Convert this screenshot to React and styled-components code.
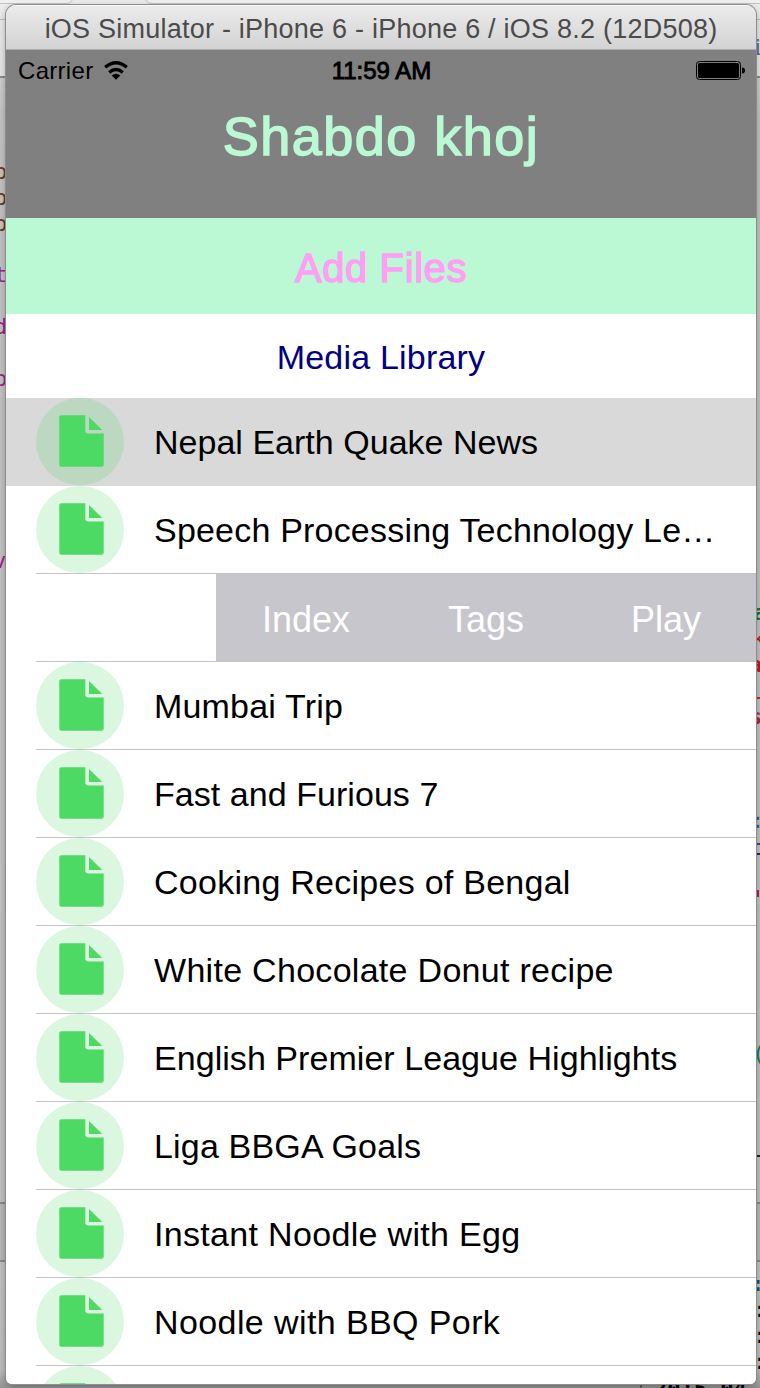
import React from 'react';
import styled, { createGlobalStyle } from 'styled-components';

const Global = createGlobalStyle`
  * { box-sizing: border-box; }
  body { margin: 0; font-family: "Liberation Sans", Arial, sans-serif; }
`;

const Desktop = styled.div`
  position: relative;
  width: 760px;
  height: 1388px;
  padding: 5px 4px 4px 6px;
  overflow: hidden;
  background: linear-gradient(#ececec 0, #e6e6e6 77px, #cfcfcf 78px, #c5c5c5 120px, #c2c2c2 1202px, #b8b8b8 1204px, #b8b8b8 1260px, #c3c3c3 1262px, #bdbdbd 1370px, #969696 1388px);
`;

const Tab = styled.div`
  position: absolute;
  top: -10px;
  left: ${p => p.$x}px;
  width: ${p => p.$w}px;
  height: 14px;
  border: 1px solid #c4c4c4;
  border-radius: 6px;
  background: #f0f0f0;
`;

const Rule = styled.div`
  position: absolute;
  top: ${p => p.$y}px;
  left: ${p => p.$x || 0}px;
  width: ${p => p.$w || 760}px;
  height: ${p => p.$h || 2}px;
  background: ${p => p.$color || '#8b8b8b'};
`;

const Code = styled.span`
  position: absolute;
  top: ${p => p.$y - 13}px;
  left: ${p => p.$x}px;
  font: ${p => (p.$bold ? 700 : 400)} 22px/26px "DejaVu Sans Mono", monospace;
  color: ${p => p.$color};
  white-space: pre;
`;

const Window = styled.div`
  position: relative;
  display: flex;
  flex-direction: column;
  height: 1379px;
  overflow: hidden;
  border-radius: 10px 10px 6px 6px;
  background: #fff;
  box-shadow: 0 0 0 1px #8d8d8d, 0 3px 8px #0005;
`;

const TitleBar = styled.div`
  flex: none;
  height: 45px;
  display: flex;
  justify-content: center;
  align-items: center;
  padding-top: 4px;
  border-top: 1px solid #f8f8f8;
  border-bottom: 1px solid #acacac;
  background: linear-gradient(#ebebeb, #d3d3d3);
  color: #4b4b4b;
`;

const Label = styled.span`
  white-space: pre;
  font-size: ${p => p.$size}px;
  line-height: 1.15;
  letter-spacing: ${p => p.$track || 0}px;
  -webkit-text-stroke: ${p => p.$stroke || 0}px currentColor;
`;

const StatusBar = styled.div`
  height: 40px;
  display: grid;
  grid-template-columns: 1fr auto 1fr;
  align-items: center;
  padding: 1px 11px 0 12px;
  color: #000;
`;

const Carrier = styled.div`
  display: flex;
  align-items: center;
  gap: 11px;
`;

const Battery = styled.svg`
  justify-self: end;
`;

const Header = styled.header`
  flex: none;
  height: 168px;
  background: #808080;
`;

const Heading = styled.div`
  display: flex;
  justify-content: center;
  padding-top: 15px;
  color: #bbf9d5;
`;

const Banner = styled.div`
  flex: none;
  display: flex;
  align-items: center;
  justify-content: center;
  height: ${p => p.$h}px;
  padding-top: 3px;
  background: ${p => p.$bg};
  color: ${p => p.$color};
`;

const Row = styled.div`
  flex: none;
  display: flex;
  height: 88px;
  padding-left: 30px;
  background: ${p => (p.$selected ? '#d9d9d9' : '#fff')};
`;

const RowBody = styled.div`
  flex: 1;
  display: flex;
  align-items: center;
  gap: 30px;
  border-bottom: 1px solid ${p => (p.$line ? '#c4c4c7' : 'transparent')};
  color: #000;
`;

const RowName = styled(Label)`
  padding-top: 3px;
`;

const Badge = styled.svg`
  flex: none;
  align-self: flex-start;
`;

const Actions = styled.div`
  width: 540px;
  margin: 0 0 0 auto;
  height: 87px;
  display: grid;
  grid-template-columns: repeat(3, 1fr);
  background: #c7c6cc;
  color: #fff;
`;

const Action = styled.div`
  display: flex;
  align-items: center;
  justify-content: center;
  padding-top: 4px;
`;

const FileBadge = () => (
  <Badge width="88" height="88" viewBox="0 0 88 88">
    <ellipse cx="44" cy="43.6" rx="44" ry="43.7" fill="#4cd964" fillOpacity=".2" />
    <path fill="#4cd964" d="M25.300 17.300H49.300v15.200a3 3 0 0 0 3 3H67.700V66.700a2 2 0 0 1-2 2H25.300a2 2 0 0 1-2-2V19.300a2 2 0 0 1 2-2Z" />
    <path fill="#4cd964" d="M53 19l13.200 13H53Z" />
  </Badge>
);

const files = [
  { name: 'Nepal Earth Quake News', selected: true, track: 0.02 },
  { name: 'Speech Processing Technology Le…', track: 0.2 },
  { actions: ['Index', 'Tags', 'Play'] },
  { name: 'Mumbai Trip', track: 0.18 },
  { name: 'Fast and Furious 7', track: 0.05 },
  { name: 'Cooking Recipes of Bengal', track: 0.26 },
  { name: 'White Chocolate Donut recipe', track: 0.29 },
  { name: 'English Premier League Highlights', track: 0.05 },
  { name: 'Liga BBGA Goals', track: 0.17 },
  { name: 'Instant Noodle with Egg', track: 0.32 },
  { name: 'Noodle with BBQ Pork', track: 0.4 },
  { name: '' },
];

const code = [
  { t: 'p', x: -6, y: 172, color: '#6b3a1e' },
  { t: 'p', x: -6, y: 198, color: '#6b3a1e' },
  { t: 'p', x: -6, y: 224, color: '#6b3a1e' },
  { t: 't', x: -6, y: 275, color: '#9b2393' },
  { t: 'd', x: -6, y: 327, color: '#9b2393' },
  { t: 'p', x: -6, y: 379, color: '#9b2393' },
  { t: 'v', x: -7, y: 561, color: '#9b2393' },
  { t: 'i', x: 751, y: 48, color: '#5b73a5' },
  { t: 'a', x: 753, y: 613, color: '#0b7d1c', bold: true },
  { t: 'k', x: 752, y: 639, color: '#c41a16' },
  { t: 'a', x: 749, y: 665, color: '#c41a16', bold: true },
  { t: 's', x: 749, y: 717, color: '#c41a3c', bold: true },
  { t: ':', x: 751, y: 821, color: '#2b5a9a' },
  { t: '(', x: 752, y: 1054, color: '#0a7d5c' },
  { t: ':', x: 751, y: 1284, color: '#1b4f8c', bold: true },
  { t: ':', x: 753, y: 1310, color: '#111' },
  { t: ':', x: 753, y: 1336, color: '#111' },
  { t: ':', x: 753, y: 1362, color: '#111' },
  { t: '2015-04-', x: 654, y: 1389, color: '#000', bold: true },
];

const rules = [
  { y: 19, h: 1, color: '#bdbdbd' },
  { y: 76 },
  { y: 697, x: 756, color: '#c0302a' },
  { y: 843, x: 756, color: '#4a3f8a' },
  { y: 853, x: 756, color: '#30207a' },
  { y: 890, x: 756, w: 3, h: 7, color: '#c2185b' },
  { y: 1155, x: 756, color: '#222' },
  { y: 1202 },
  { y: 1260 },
  { y: 1384, x: 640, w: 2, h: 4, color: '#666' },
];

export default function App() {
  return (
    <Desktop>
      <Global />
      <Tab $x={-20} $w={93} />
      <Tab $x={145} $w={640} />
      {rules.map(r => <Rule key={r.y} $y={r.y} $x={r.x} $w={r.w} $h={r.h} $color={r.color} />)}
      {code.map(c => <Code key={c.y} $y={c.y} $x={c.x} $color={c.color} $bold={c.bold}>{c.t}</Code>)}
      <Window>
        <TitleBar><Label $size={27} $track={0.23}>iOS Simulator - iPhone 6 - iPhone 6 / iOS 8.2 (12D508)</Label></TitleBar>
        <Header>
          <StatusBar>
            <Carrier>
              <Label $size={24} $track={0.3}>Carrier</Label>
              <svg width="26" height="20" viewBox="0 0 26 20">
                <g fill="none" stroke="#000" strokeWidth="3.3">
                  <path d="M1.200 6.300q10.800-9 21.600 0" />
                  <path d="M5.200 11.400q6.800-5.800 13.600 0" />
                </g>
                <path d="M12 18.800l-4.300-4.300q4.300-3.600 8.600 0Z" />
              </svg>
            </Carrier>
            <Label $size={24} $stroke={0.9}>11:59 AM</Label>
            <Battery width="49" height="20" viewBox="0 0 49 20">
              <rect x=".5" y=".5" width="44" height="18" rx="3" fill="none" stroke="#000" />
              <rect x="2" y="2" width="41" height="15" rx="1.500" />
              <path d="M46 6.500q3 0 3 3t-3 3Z" />
            </Battery>
          </StatusBar>
          <Heading><Label $size={54} $track={1.5} $stroke={1.5}>Shabdo khoj</Label></Heading>
        </Header>
        <Banner $h={96} $bg="#bbf9d5" $color="#ff9ff3"><Label $size={40} $track={0.6} $stroke={1.4}>Add Files</Label></Banner>
        <Banner $h={84} $bg="#fff" $color="#000080"><Label $size={34} $track={0.2}>Media Library</Label></Banner>
        {files.map((f, i) => (
          <Row key={i} $selected={f.selected}>
            <RowBody $line={!f.selected}>
              {f.actions ? (
                <Actions>{f.actions.map(a => <Action key={a}><Label $size={36}>{a}</Label></Action>)}</Actions>
              ) : (
                <><FileBadge /><RowName $size={34} $track={f.track}>{f.name}</RowName></>
              )}
            </RowBody>
          </Row>
        ))}
      </Window>
    </Desktop>
  );
}
